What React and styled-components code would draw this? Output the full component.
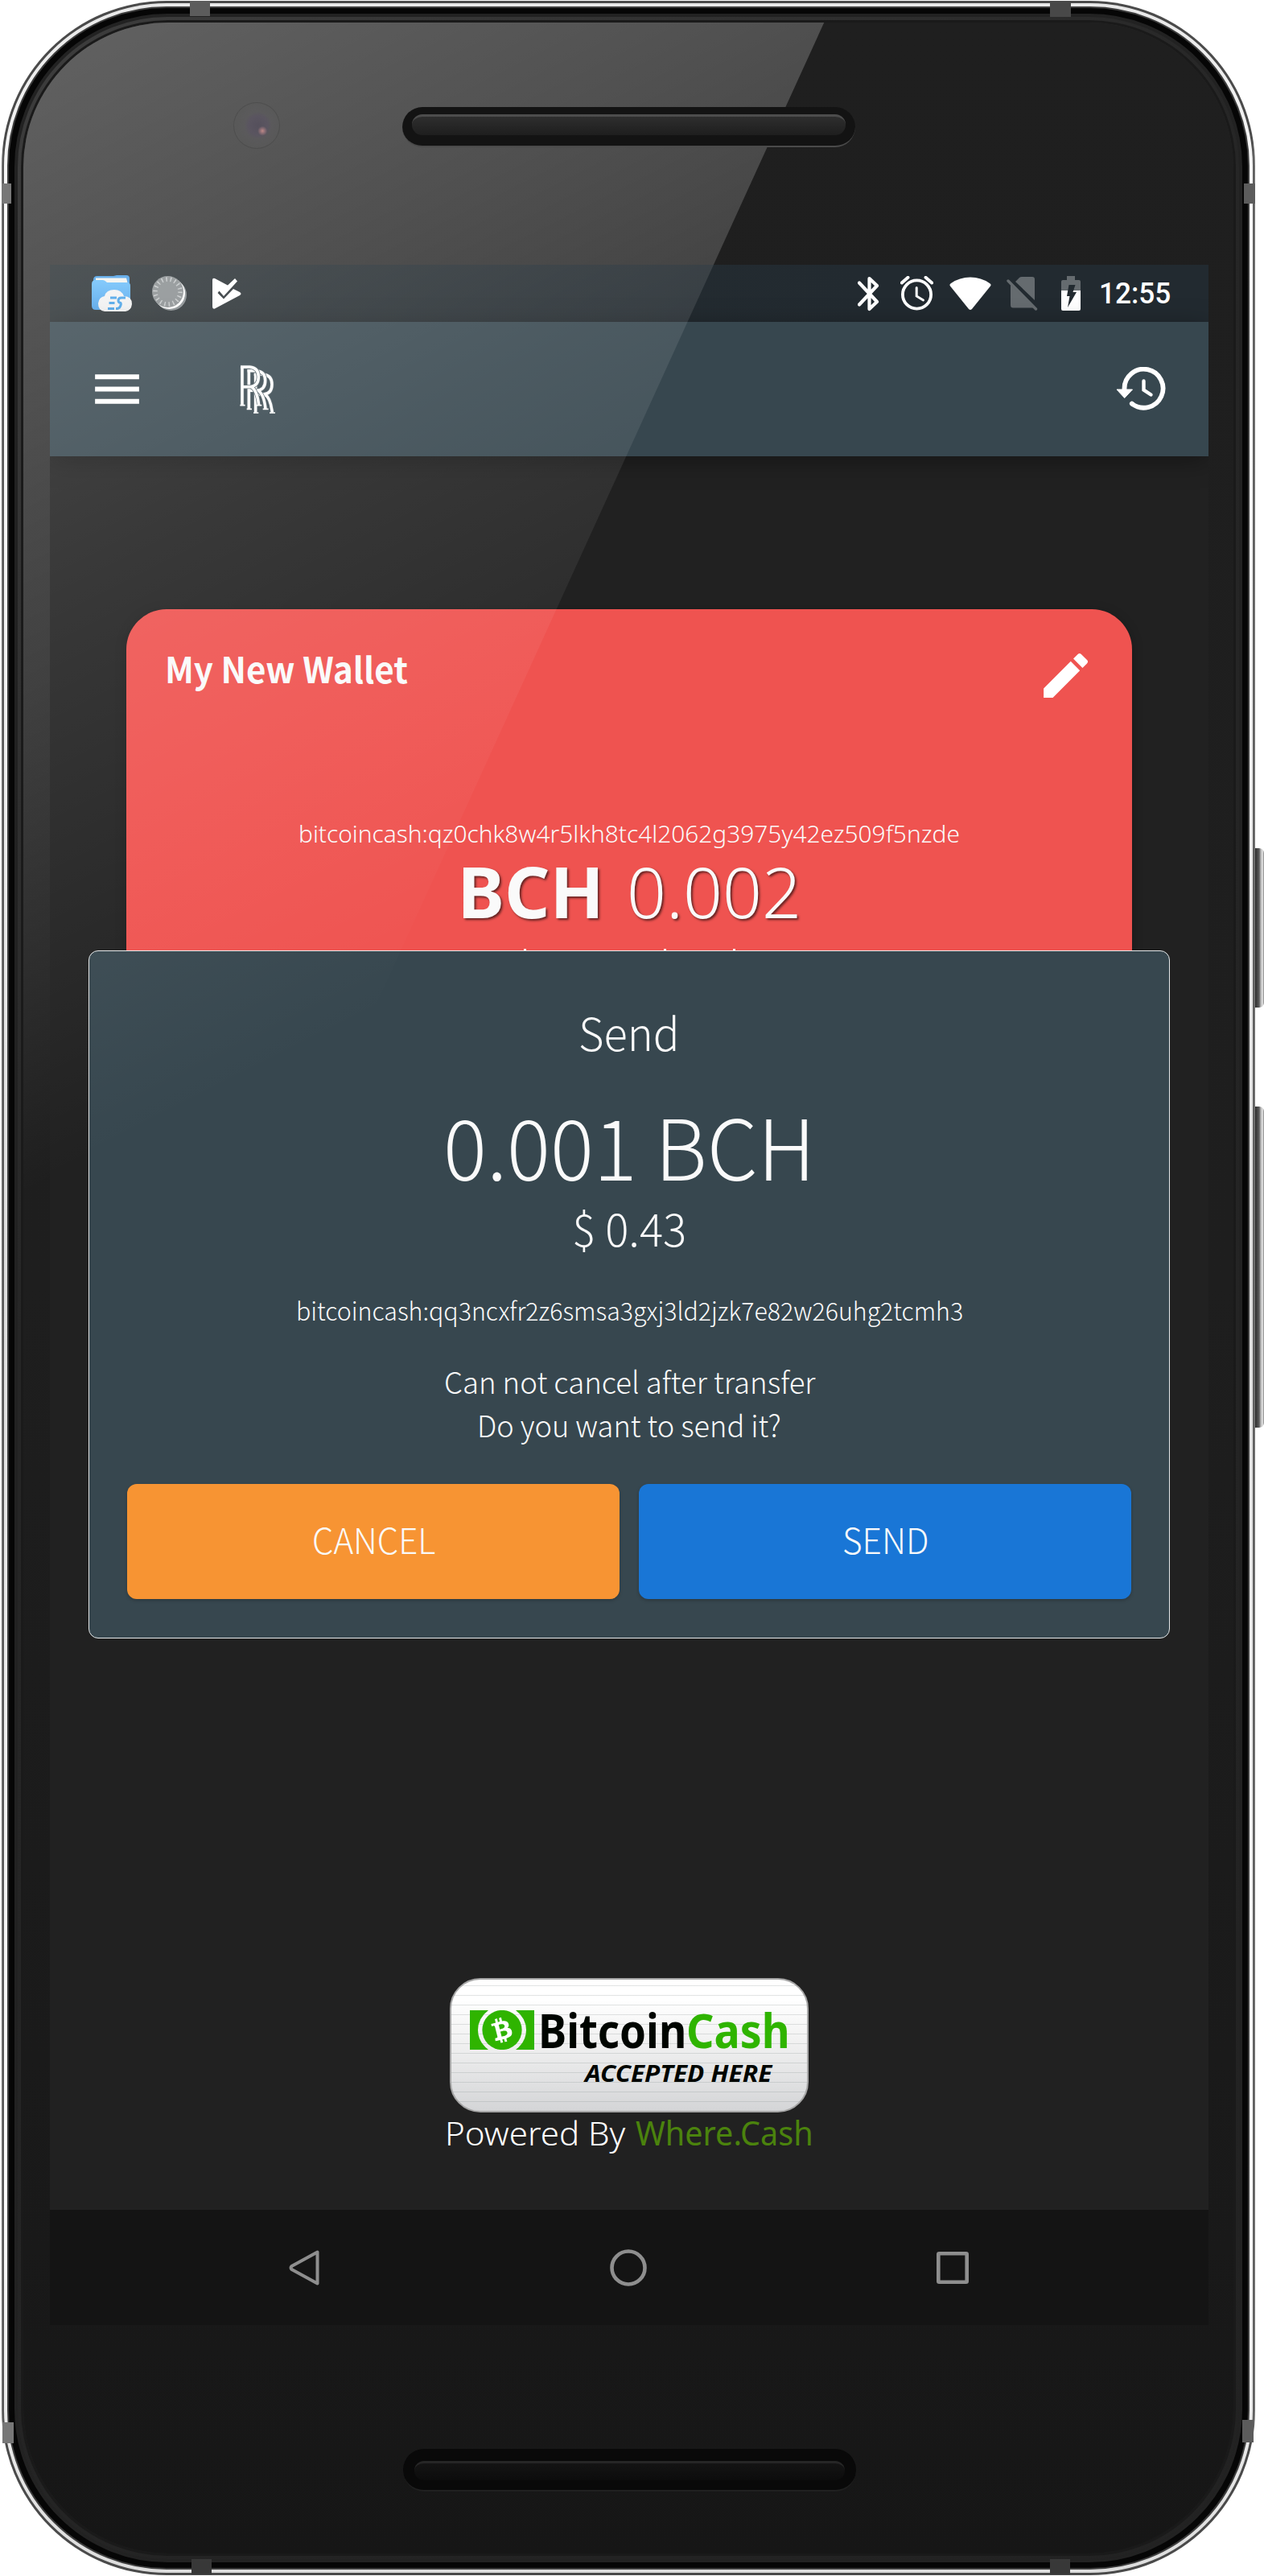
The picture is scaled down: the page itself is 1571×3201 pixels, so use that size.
import React, { useLayoutEffect, useRef, useState } from 'react';
import styled, { createGlobalStyle } from 'styled-components';
import { MdModeEdit, MdMenu } from 'react-icons/md';
import { FaBtc } from 'react-icons/fa';

const cjk = '"Noto Sans CJK KR", "Noto Sans CJK JP", "Noto Sans", sans-serif';
const humanist = '"Noto Sans", "Open Sans", sans-serif';

const Global = createGlobalStyle`
  * { box-sizing: border-box; }
  body { margin: 0; background: #fff; font-family: ${cjk}; }
  svg { display: block; flex: none; }
`;

/* ---------- text that is set to an exact measure ---------- */

const Measure = styled.span`
  display: inline-block;
  width: ${p => p.$w}px;
  height: ${p => p.$lh}px;
  line-height: ${p => p.$lh}px;
  font-family: ${p => p.$font || cjk};
  font-size: ${p => p.$size}px;
  font-weight: ${p => p.$weight || 300};
  font-style: ${p => (p.$italic ? 'italic' : 'normal')};
  color: ${p => p.$color || '#fafafa'};
  text-shadow: ${p => p.$shadow || 'none'};
  white-space: pre;
  flex: none;
`;
const Stretch = styled.span`
  display: inline-block;
  transform-origin: 0 50%;
`;

function Fit({ w, lh, size, font, weight, italic, color, shadow, children }) {
  const ref = useRef(null);
  const [scale, setScale] = useState(1);
  useLayoutEffect(() => {
    setScale(w / ref.current.offsetWidth);
  }, [w]);
  return (
    <Measure $w={w} $lh={lh || size} $size={size} $font={font} $weight={weight} $italic={italic} $color={color} $shadow={shadow}>
      <Stretch ref={ref} style={{ transform: `scaleX(${scale})` }}>{children}</Stretch>
    </Measure>
  );
}

/* ---------- device ---------- */

const Stage = styled.div`
  display: flex;
  width: 1571px;
  height: 3201px;
  padding: 1px 0 1px 2px;
  background: #fff;
`;
const Metal = styled.div`
  position: relative;
  width: 1558px;
  height: 3199px;
  padding: 3px;
  border-radius: 205px / 205px;
  background: linear-gradient(90deg, #777 0, #4a4a4a 3px, #4a4a4a 1554px, #777 1558px);
`;
const Chrome = styled.div`
  height: 100%;
  padding: 4px;
  border-radius: 202px;
  background: linear-gradient(#e8e8e8, #fff 10%, #ddd 50%, #fff 85%, #ddd);
`;
const Edge = styled.div`
  height: 100%;
  padding: 7px;
  border-radius: 198px;
  background: #060606;
  border: 2px solid #3c3c3c;
`;
const Rim = styled.div`
  height: 100%;
  padding: 7px;
  border-radius: 190px;
  background: linear-gradient(135deg, #3d3d3d, #262626 35%, #222);
  border: 4px solid #222;
`;
const Glass = styled.div`
  position: relative;
  display: flex;
  flex-direction: column;
  height: 100%;
  padding: 0 31px 0 33px;
  border-radius: 180px;
  background: linear-gradient(#1f1f1f, #1e1e1e 50%, #191919 88%, #161616);
  box-shadow: 0 0 0 3px #1a1a1a;
  overflow: hidden;
`;
const GlassShine = styled.svg`
  position: absolute;
  left: 0;
  top: 0;
`;
const Antenna = styled.div`
  position: absolute;
  background: ${p => p.$c || '#5c5c5c'};
  left: ${p => p.$x}px;
  top: ${p => p.$y}px;
  width: ${p => p.$w}px;
  height: ${p => p.$h}px;
`;
const Keys = styled.div`
  padding-top: 1053px;
`;
const Key = styled.div`
  width: 11px;
  height: ${p => p.$h}px;
  margin-bottom: 123px;
  border-radius: 0 6px 6px 0;
  background: linear-gradient(90deg, #2e2e2e, #5a5a5a 45%, #bbb 65%, #e4e4e4 85%, #777);
`;

const TopBezel = styled.div`
  position: relative;
  display: flex;
  height: 301px;
  flex: none;
  padding: 99px 0 0 228px;
`;
const Camera = styled.div`
  width: 58px;
  height: 58px;
  margin-right: 152px;
  border-radius: 50%;
  border: 1px solid rgba(0, 0, 0, 0.12);
  background:
    radial-gradient(circle at 63% 62%, #c08a88 0, rgba(160, 120, 125, 0.7) 3px, transparent 6px),
    radial-gradient(circle at 53% 50%, #55505c 0, #5a5560 12px, rgba(96, 94, 98, 0.4) 17px, rgba(90, 90, 90, 0.5) 27px);
`;
const Speaker = styled.div`
  width: 563px;
  height: ${p => p.$h}px;
  margin-top: 6px;
  padding: ${p => p.$pad};
  border-radius: 26px;
  background: ${p => p.$bg};
  border-bottom: 2px solid ${p => p.$line};
`;
const SpeakerBar = styled.div`
  height: 100%;
  border-radius: 13px;
  border-top: 3px solid ${p => p.$hi};
  background: linear-gradient(${p => p.$from}, ${p => p.$to});
`;
const BottomBezel = styled.div`
  display: flex;
  justify-content: center;
  padding: 148px 0 0 0;
`;

/* ---------- screen ---------- */

const Screen = styled.div`
  position: relative;
  display: flex;
  flex-direction: column;
  width: 1440px;
  height: 2560px;
  flex: none;
  background: #212121;
  overflow: hidden;
`;
const ScreenShine = styled.svg`
  position: absolute;
  left: 0;
  top: 0;
  pointer-events: none;
`;
const StatusBar = styled.div`
  display: flex;
  align-items: center;
  height: 71px;
  flex: none;
  padding: 0 47px 0 52px;
  background: linear-gradient(90deg, #272e31, #222a30 70%);
`;
const StatusGroup = styled.div`
  display: flex;
  align-items: center;
  gap: ${p => p.$gap}px;
  margin-left: ${p => p.$ml || 0};
`;
const AppBar = styled.div`
  display: flex;
  align-items: center;
  height: 167px;
  flex: none;
  padding: 0 53px 0 47px;
  background: #37474f;
  box-shadow: 0 6px 30px rgba(0, 0, 0, 0.35);
  color: #fff;
`;
const Brand = styled.div`
  margin-left: 115px;
  margin-right: auto;
`;
const Content = styled.main`
  display: flex;
  flex-direction: column;
  height: 2179px;
  flex: none;
  padding: 190px 95px 0;
`;
const Card = styled.section`
  display: flex;
  flex-direction: column;
  height: 760px;
  border-radius: 50px;
  background: #ef5350;
  box-shadow: 0 3px 14px rgba(0, 0, 0, 0.25);
`;
const CardHead = styled.div`
  display: flex;
  justify-content: space-between;
  padding: 46px 46px 0 48px;
  height: 260px;
  color: #fff;
`;
const CardLine = styled.div`
  display: flex;
  justify-content: center;
  align-items: center;
  height: ${p => p.$h}px;
  margin-top: ${p => p.$mt || 0}px;
  gap: ${p => p.$gap || 0}px;
`;
const Peek = styled.div`
  display: flex;
  margin: 34px 0 0 494px;
`;
const Tip = styled.i`
  width: 3px;
  height: 3px;
  margin-right: ${p => p.$mr}px;
  background: #fff;
`;
const Footer = styled.footer`
  display: flex;
  flex-direction: column;
  align-items: center;
  margin-top: auto;
  padding-bottom: 67px;
`;
const Badge = styled.div`
  display: flex;
  flex-direction: column;
  width: 446px;
  height: 167px;
  padding: 33px 0 0 23px;
  border: 2px solid #a6a6a6;
  border-radius: 38px;
  background:
    repeating-linear-gradient(transparent 0 7px, rgba(120, 130, 130, 0.22) 7px 8px, transparent 8px 12px),
    linear-gradient(#fff 15%, #f0f0f0 50%, #d4d5d7);
`;
const BadgeRow = styled.div`
  display: flex;
  align-items: center;
  height: 59px;
  gap: 5px;
`;
const BadgeWord = styled.div`
  display: flex;
`;
const BadgeTag = styled.div`
  padding: 9px 0 0 143px;
  line-height: 0;
`;
const Powered = styled.div`
  display: flex;
  gap: 13px;
  height: 54px;
`;

const NavBar = styled.nav`
  display: flex;
  align-items: center;
  justify-content: space-between;
  height: 143px;
  flex: none;
  padding: 0 298px 0 297px;
  background: #141414;
`;

/* ---------- dialog ---------- */

const Dialog = styled.div`
  position: absolute;
  left: 48px;
  top: 852px;
  display: flex;
  flex-direction: column;
  width: 1344px;
  height: 855px;
  padding: 48px 47px 0;
  border: 1px solid #e6e9ea;
  border-radius: 12px;
  background: #37474f;
`;
const Line = styled.div`
  display: flex;
  justify-content: center;
  height: ${p => p.$h}px;
  margin-top: ${p => p.$mt || 0}px;
`;
const Actions = styled.div`
  display: grid;
  grid-template-columns: 1fr 1fr;
  gap: 24px;
  margin-top: 47px;
`;
const Action = styled.button`
  display: flex;
  align-items: center;
  justify-content: center;
  height: 143px;
  padding: 0 0 7px;
  border: 0;
  border-radius: 12px;
  background: ${p => p.$bg};
  box-shadow: 0 2px 4px rgba(0, 0, 0, 0.2);
`;

/* ---------- icons ---------- */

const FolderCloud = () => (
  <svg width="50" height="45" viewBox="0 0 50 45">
    <defs>
      <linearGradient id="fold" x1="0" y1="0" x2="0" y2="1">
        <stop offset="0" stopColor="#6cc0fb" />
        <stop offset="1" stopColor="#4aa0ea" />
      </linearGradient>
    </defs>
    <path d="M2 6Q2 1 7 1H27L31 0H43Q47 0 47 4V12H2Z" fill="#4a9fe6" />
    <path d="M5 3.500H43L45 11H5Z" fill="#f3f3ee" />
    <path d="M0 11Q0 6 5 6H14Q16 6 19 9H44Q48 9 48 13V38Q48 43 43 43H5Q0 43 0 38Z" fill="url(#fold)" />
    <path d="M16 45Q8 44 8 35Q9 27 16 26Q18 18 28 18Q37 18 40 26Q50 26 50 36Q49 44 42 45Z" fill="#f2f2f2" />
    <path d="M23 28H31M21.5 34.5H28.500M20 41.500H28M42 28H37Q33 28 33 31.500Q33 34 36 34.500Q37 36 35 39.500Q34 41.500 30 41.500" fill="none" stroke="#42a0e8" strokeWidth="3" />
  </svg>
);

const Coin = () => (
  <svg width="43" height="43" viewBox="0 0 43 43">
    <circle cx="23.500" cy="23.500" r="19.500" fill="#858b8e" />
    <circle cx="21.500" cy="21.500" r="19.500" fill="#fff" />
    <circle cx="19.500" cy="19.500" r="19.500" fill="#888d8f" />
    <circle cx="19.500" cy="19.500" r="15.500" fill="none" stroke="#c3c7c8" strokeWidth="5.500" strokeDasharray="1.500 3.910" />
  </svg>
);

const PlayCheck = () => (
  <svg width="38" height="39" viewBox="0 0 38 39">
    <path d="M1 3Q1 0 4 1L20 9.500L29 1L32 4.500L15 23L9.500 16.500L7.500 19L15 26.500L27 14L35 18Q38 20 35 22L4 38.500Q1 39.500 1 36Z" fill="#fff" />
  </svg>
);

const Bluetooth = () => (
  <svg width="27" height="44" viewBox="0 0 27 44">
    <path d="M2 8.500L24 32L14.500 41V3L24 12L2 35.500" fill="none" stroke="#fff" strokeWidth="4.200" strokeLinecap="round" strokeLinejoin="round" />
  </svg>
);

const Alarm = () => (
  <svg width="41" height="43" viewBox="0 0 41 43">
    <g fill="none" stroke="#fff" strokeLinecap="round">
      <circle cx="20.500" cy="23" r="17.600" strokeWidth="3.800" />
      <path d="M1.800 8.500L9.500 1.800M39.200 8.500L31.500 1.800" strokeWidth="4" />
      <path d="M20.200 14.500V25L28.500 30" strokeWidth="3" />
    </g>
  </svg>
);

const Wifi = () => (
  <svg width="52" height="42" viewBox="0 0 52 42">
    <path d="M1 11.500Q-0.500 9.500 2 8Q12.500 0.500 26 0.500T50 8Q52.500 9.500 51 11.500L28 40Q26 42 24 40Z" fill="#fff" />
  </svg>
);

const NoSim = () => (
  <svg width="39" height="43" viewBox="0 0 39 43">
    <path d="M11 7L16 2Q17 1 19 1H32Q35 1 35 4V30ZM5 11L35 40L33 39.500H8Q5 39.500 5 36Z" fill="#656b6f" />
    <path d="M2 6L36.500 41" stroke="#656b6f" strokeWidth="3.400" strokeLinecap="round" />
  </svg>
);

const Battery = () => (
  <svg width="24" height="43" viewBox="0 0 24 43">
    <path d="M7 0H17V5H22Q24 5 24 7V18H0V7Q0 5 2 5H7Z" fill="#656b6f" />
    <path d="M0 18H24V41Q24 43 22 43H2Q0 43 0 41Z" fill="#fff" />
    <path d="M9.500 11H17.500L14.500 20H19L8 39L10.500 25H7Z" fill="#222a30" />
  </svg>
);

const History = () => (
  <svg width="62" height="55" viewBox="0 0 62 55">
    <g fill="none" stroke="#fff" strokeLinecap="round">
      <path d="M10.500 28V27A24 24 0 1 1 20 45.800" strokeWidth="5.800" strokeLinecap="butt" />
      <path d="M20 45.800L19.800 45.600" strokeWidth="5.800" />
      <path d="M34.500 17.500V28.500L43.500 34.500" strokeWidth="4.400" />
    </g>
    <path d="M1 28H20.500L10.700 38.500Z" fill="#fff" stroke="#fff" strokeLinejoin="round" />
  </svg>
);

const letter = 'M90 77V219M84 77H118Q151 80 151 114Q151 148 120 151H95M124 151Q146 164 152 219';
const Monogram = () => (
  <svg width="46" height="62" viewBox="78 68 138 186">
    {[2, 1, 0].map(i => (
      <g key={i} transform={`translate(${i * 25} ${i * 14})`} fill="none">
        <path d={letter} stroke="#55646b" strokeWidth="15" />
        <path d={letter} stroke="#fff" strokeWidth="10.5" />
        <path d="M82 220H101M142 220H163" stroke="#fff" strokeWidth="5" />
      </g>
    ))}
  </svg>
);

const CashMark = () => (
  <svg width="80" height="49" viewBox="0 0 80 49">
    <path d="M0 0H23Q10 10 10 24.500T23 49H0ZM80 0H57Q70 10 70 24.500T57 49H80Z" fill="#2fb400" />
    <circle cx="40" cy="24.500" r="24.600" fill="#2fb400" />
    <g transform="rotate(-14 40 24.500)">
      <FaBtc x="24.500" y="9" size={31} color="#fff" />
    </g>
  </svg>
);

const Back = () => (
  <svg width="38" height="46" viewBox="0 0 38 46">
    <path d="M35.500 3.500V42.500L3.500 25Q1.500 23 3.500 21Z" fill="none" stroke="#8e8e8e" strokeWidth="4" strokeLinejoin="round" />
  </svg>
);
const Home = () => (
  <svg width="46" height="46" viewBox="0 0 46 46">
    <circle cx="23" cy="23" r="20.500" fill="none" stroke="#8e8e8e" strokeWidth="4.600" />
  </svg>
);
const Recent = () => (
  <svg width="40" height="40" viewBox="0 0 40 40">
    <rect x="2.300" y="2.300" width="35.400" height="35.400" rx="1" fill="none" stroke="#8e8e8e" strokeWidth="4.600" />
  </svg>
);

const Shine = ({ id, stops, ox, oy, w, h, as: Svg }) => (
  <Svg width={w} height={h} viewBox={`${ox} ${oy} ${w} ${h}`}>
    <defs>
      <linearGradient id={id} gradientUnits="userSpaceOnUse" x1="30" y1="34" x2="615" y2="1191">
        {stops.map(([o, a]) => <stop key={o} offset={o} stopColor="#fff" stopOpacity={a} />)}
      </linearGradient>
    </defs>
    <path d="M0 0H1037L270 1681H0Z" fill={`url(#${id})`} />
  </Svg>
);

export default function App() {
  return (
    <Stage>
      <Global />
      <Metal>
        <Chrome>
          <Edge>
            <Rim>
              <Glass>
                <Shine id="gs" as={GlassShine} ox={29} oy={28} w={1504} h={1700}
                  stops={[[0, 0.3], [0.32, 0.22], [0.57, 0.15], [1, 0]]} />
                <TopBezel>
                  <Camera />
                  <Speaker $h={50} $pad="9px 12px 13px" $bg="#131313" $line="#4a4a4a">
                    <SpeakerBar $hi="#4c4c4c" $from="#2e2e2e" $to="#1e1e1e" />
                  </Speaker>
                </TopBezel>
                <Screen>
                  <StatusBar>
                    <StatusGroup $gap={0}>
                      <FolderCloud />
                      <StatusGroup $gap={31} $ml="25px"><Coin /><PlayCheck /></StatusGroup>
                    </StatusGroup>
                    <StatusGroup $gap={20} $ml="auto">
                      <StatusGroup $gap={26}><Bluetooth /><Alarm /></StatusGroup>
                      <StatusGroup $gap={19}>
                        <Wifi /><NoSim />
                        <StatusGroup $gap={23} $ml="10px">
                          <Battery />
                          <Fit w={89} lh={42} size={36} weight={500} font="Roboto, sans-serif" color="#fff">12:55</Fit>
                        </StatusGroup>
                      </StatusGroup>
                    </StatusGroup>
                  </StatusBar>
                  <AppBar>
                    <MdMenu size={73} />
                    <Brand><Monogram /></Brand>
                    <History />
                  </AppBar>
                  <Content>
                    <Card>
                      <CardHead>
                        <Fit w={302} lh={54} size={44} weight={700}>My New Wallet</Fit>
                        <MdModeEdit size={73} />
                      </CardHead>
                      <CardLine $h={38}>
                        <Fit w={822} lh={38} size={30} font={humanist}>bitcoincash:qz0chk8w4r5lkh8tc4l2062g3975y42ez509f5nzde</Fit>
                      </CardLine>
                      <CardLine $h={76} $mt={14} $gap={28}>
                        <Fit w={182} lh={76} size={88} weight={700} font={humanist} shadow="2px 2px 3px rgba(0,0,0,.6)">BCH</Fit>
                        <Fit w={217} lh={76} size={87} font={humanist} shadow="2px 2px 3px rgba(0,0,0,.6)">0.002</Fit>
                      </CardLine>
                      <Peek><Tip $mr={171} /><Tip $mr={83} /><Tip $mr={0} /></Peek>
                    </Card>
                    <Footer>
                      <Badge>
                        <BadgeRow>
                          <CashMark />
                          <BadgeWord>
                            <Fit w={184} lh={59} size={60} weight={700} font={humanist} color="#000500">Bitcoin</Fit>
                            <Fit w={129} lh={59} size={60} weight={700} font={humanist} color="#2fb400">Cash</Fit>
                          </BadgeWord>
                        </BadgeRow>
                        <BadgeTag>
                          <Fit w={232} lh={30} size={29} weight={700} italic font={humanist} color="#000500">ACCEPTED HERE</Fit>
                        </BadgeTag>
                      </Badge>
                      <Powered>
                        <Fit w={224} lh={51} size={40} font={humanist} color="#fff">Powered By</Fit>
                        <Fit w={221} lh={51} size={41} weight={400} font={humanist} color="#4b830d">Where.Cash</Fit>
                      </Powered>
                    </Footer>
                  </Content>
                  <NavBar><Back /><Home /><Recent /></NavBar>
                  <Dialog>
                    <Line $h={104}><Fit w={126} lh={104} size={56}>Send</Fit></Line>
                    <Line $h={151} $mt={12}><Fit w={462} lh={151} size={104}>0.001 BCH</Fit></Line>
                    <Line $h={54} $mt={1}><Fit w={142} lh={54} size={56}>$ 0.43</Fit></Line>
                    <Line $h={44} $mt={54}><Fit w={829} lh={44} size={31}>bitcoincash:qq3ncxfr2z6smsa3gxj3ld2jzk7e82w26uhg2tcmh3</Fit></Line>
                    <Line $h={54} $mt={39}><Fit w={461} lh={54} size={37.5}>Can not cancel after transfer</Fit></Line>
                    <Line $h={54}><Fit w={378} lh={54} size={37.5}>Do you want to send it?</Fit></Line>
                    <Actions>
                      <Action $bg="#f79433"><Fit w={153} lh={60} size={44}>CANCEL</Fit></Action>
                      <Action $bg="#1976d6"><Fit w={107} lh={60} size={44}>SEND</Fit></Action>
                    </Actions>
                  </Dialog>
                  <Shine id="ss" as={ScreenShine} ox={62} oy={329} w={1440} h={1400}
                    stops={[[0, 0.26], [0.22, 0.18], [0.5, 0.105], [1, 0]]} />
                </Screen>
                <BottomBezel>
                  <Speaker $h={53} $pad="15px 14px 12px" $bg="#090909" $line="#202020">
                    <SpeakerBar $hi="#262626" $from="#141414" $to="#0c0c0c" />
                  </Speaker>
                </BottomBezel>
              </Glass>
            </Rim>
          </Edge>
        </Chrome>
        <Antenna $x={234} $y={0} $w={25} $h={19} />
        <Antenna $x={1303} $y={1} $w={26} $h={19} $c="#484848" />
        <Antenna $x={0} $y={227} $w={12} $h={25} $c="#777" />
        <Antenna $x={1544} $y={227} $w={14} $h={25} />
        <Antenna $x={1} $y={3009} $w={14} $h={26} $c="#777" />
        <Antenna $x={1542} $y={3006} $w={14} $h={28} />
        <Antenna $x={236} $y={3179} $w={25} $h={19} $c="#383838" />
        <Antenna $x={1303} $y={3179} $w={25} $h={19} $c="#383838" />
      </Metal>
      <Keys>
        <Key $h={198} />
        <Key $h={399} />
      </Keys>
    </Stage>
  );
}
